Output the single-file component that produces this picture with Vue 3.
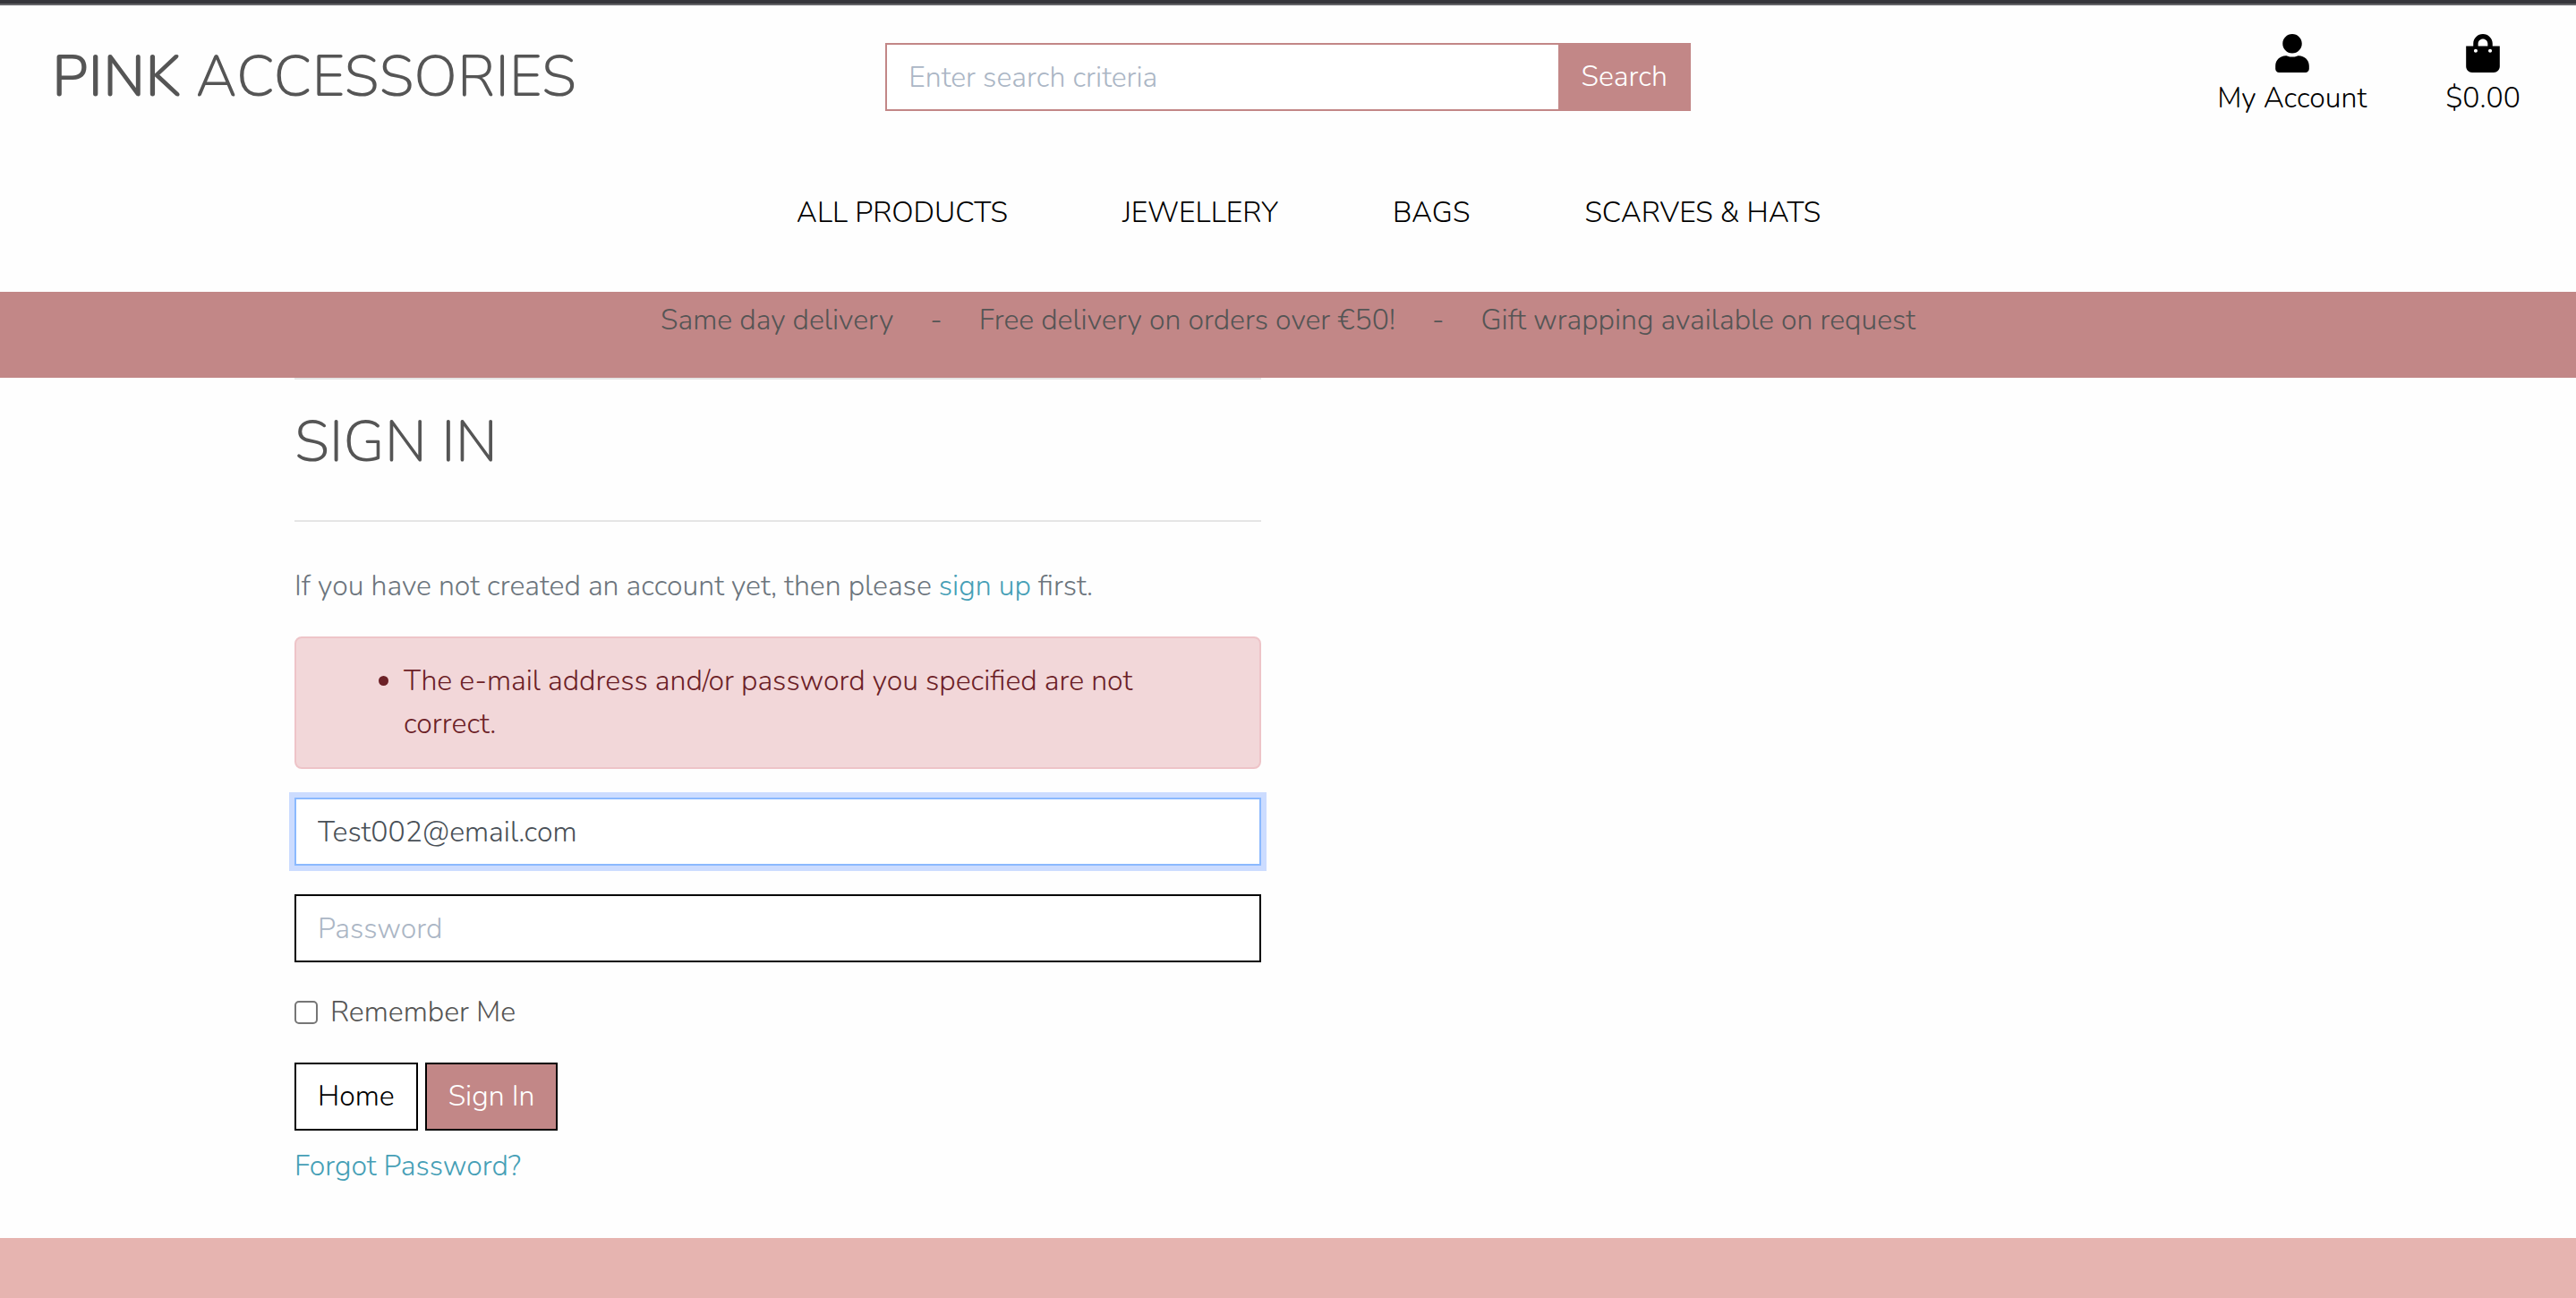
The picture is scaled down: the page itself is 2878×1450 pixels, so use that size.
<script setup>
import { ref } from 'vue'

const categories = ['ALL PRODUCTS', 'JEWELLERY', 'BAGS', 'SCARVES & HATS']
const query = ref('')
const email = ref('Test002@email.com')
const password = ref('')
const remember = ref(false)
</script>

<template>
  <div class="page">
    <header>
      <div class="masthead">
        <a class="logo" href="#"><strong>PINK</strong> ACCESSORIES</a>
        <form class="search" role="search" @submit.prevent>
          <input v-model="query" type="text" placeholder="Enter search criteria" aria-label="Search criteria">
          <button type="submit">Search</button>
        </form>
        <div class="shortcuts">
          <a href="#">
            <svg viewBox="0 0 448 512" aria-hidden="true"><path d="M224 256c70.7 0 128-57.3 128-128S294.7 0 224 0 96 57.3 96 128s57.3 128 128 128zm85 32c-24 0-36 16-85 16s-60-16-85-16C60 288 0 348 0 422v42c0 26.5 21.5 48 48 48h352c26.5 0 48-21.5 48-48v-42c0-74-60-134-139-134z" /></svg>
            <span>My Account</span>
          </a>
          <a href="#">
            <svg viewBox="0 0 448 512" aria-hidden="true"><path d="M352 160v-32C352 57.42 294.579 0 224 0 153.42 0 96 57.42 96 128v32H0v272c0 44.183 35.817 80 80 80h288c44.183 0 80-35.817 80-80V160h-96zm-192-32c0-35.29 28.71-64 64-64s64 28.71 64 64v32H160v-32zm160 120c-13.255 0-24-10.745-24-24s10.745-24 24-24 24 10.745 24 24-10.745 24-24 24zm-192 0c-13.255 0-24-10.745-24-24s10.745-24 24-24 24 10.745 24 24-10.745 24-24 24z" /></svg>
            <span>$0.00</span>
          </a>
        </div>
      </div>
      <nav>
        <a v-for="name in categories" :key="name" href="#">{{ name }}</a>
      </nav>
    </header>

    <div class="banner">
      <span>Same day delivery</span>
      <span>-</span>
      <span>Free delivery on orders over €50!</span>
      <span>-</span>
      <span>Gift wrapping available on request</span>
    </div>

    <main>
      <div class="column">
        <hr>
        <h1>SIGN IN</h1>
        <hr>
        <p class="intro">If you have not created an account yet, then please <a href="#">sign up</a> first.</p>
        <form @submit.prevent>
          <div class="alert" role="alert">
            <ul>
              <li>The e-mail address and/or password you specified are not correct.</li>
            </ul>
          </div>
          <input v-model="email" class="field active" type="email" aria-label="E-mail">
          <input v-model="password" class="field" type="password" placeholder="Password" aria-label="Password">
          <label class="remember"><input v-model="remember" type="checkbox">Remember Me</label>
          <div class="actions">
            <a class="button" href="#">Home</a>
            <button class="button primary" type="submit">Sign In</button>
          </div>
          <a class="forgot" href="#">Forgot Password?</a>
        </form>
      </div>
    </main>

    <footer></footer>
  </div>
</template>

<style>
body {
  margin: 0;
  background: #fefefe;
}
</style>

<style scoped>
* {
  box-sizing: border-box;
}

.page {
  display: flex;
  flex-direction: column;
  min-height: 100vh;
  border-top: 4px solid #36363b;
  color: #555;
  font: 300 32px/48px "Nunito", "Open Sans", sans-serif;
}

input,
button {
  font: inherit;
}

a {
  color: #459fb6;
  text-decoration: none;
}

header {
  border-top: 2px solid #646468;
}

.masthead {
  display: grid;
  grid-template-columns: repeat(3, 1fr);
  align-items: start;
  padding-top: 32px;
}

.logo {
  padding: 10px 0 0 58px;
  color: #555;
  font-size: 64px;
  line-height: 77px;
  white-space: nowrap;
}

.logo strong {
  font-weight: 400;
}

.search {
  display: flex;
  margin: 10px 30px 0;
}

.search input {
  flex: 1;
  min-width: 0;
  height: 76px;
  padding: 0 24px;
  border: 2px solid #c28787;
  border-right: 0;
  border-radius: 0;
  background: #fff;
  color: #495057;
  outline: 0;
}

::placeholder {
  color: #abb6c5;
  opacity: 1;
}

.search button {
  width: 148px;
  height: 76px;
  padding: 0;
  border: 0;
  background: #c28787;
  color: #fff;
}

.shortcuts {
  display: flex;
  justify-content: flex-end;
  gap: 88px;
  padding-right: 62px;
}

.shortcuts a {
  display: flex;
  flex-direction: column;
  align-items: center;
  gap: 5px;
  color: #000;
}

.shortcuts svg {
  width: 38px;
  height: 43px;
}

nav {
  display: flex;
  justify-content: center;
  gap: 128px;
  padding: 80px 0 64px 46px;
}

nav a {
  color: #000;
}

.banner {
  display: flex;
  justify-content: center;
  gap: 41px;
  padding: 8px 0 40px;
  background: #c28787;
}

main {
  width: 100%;
  max-width: 2280px;
  margin: 0 auto;
  padding: 0 30px;
}

.column {
  width: calc(50% - 30px);
}

hr {
  height: 2px;
  margin: 0;
  border: 0;
  background: #e5e5e5;
}

h1 {
  margin: 32px 0 48px;
  font-size: 64px;
  font-weight: 300;
  line-height: 77px;
}

.intro {
  margin: 48px 0 32px;
  color: #6c757d;
}

.alert {
  margin-bottom: 32px;
  padding: 24px 40px;
  border: 2px solid #eec4c8;
  border-radius: 8px;
  background: #f2d7d9;
  color: #6c2127;
}

.alert ul {
  margin: 0;
  padding-left: 80px;
}

.field {
  display: block;
  width: 100%;
  height: 76px;
  margin-bottom: 32px;
  padding: 0 24px;
  border: 2px solid #000;
  border-radius: 0;
  background: #fff;
  color: #495057;
  outline: 0;
}

.field.active {
  border-color: #8bb9fe;
  box-shadow: 0 0 0 6px #ccdcff;
}

.remember {
  display: flex;
  align-items: center;
  gap: 14px;
}

.remember input {
  width: 26px;
  height: 26px;
  margin: 0;
  border: 2px solid #767676;
  border-radius: 5px;
  background: #fff;
  appearance: none;
}

.remember input:checked {
  background: #c28787;
}

.actions {
  display: flex;
  gap: 8px;
  margin: 32px 0 16px;
}

.button {
  height: 76px;
  padding: 12px 24px;
  border: 2px solid #000;
  background: #fff;
  color: #000;
}

.button.primary {
  background: #c28787;
  color: #fff;
}

.forgot {
  display: table;
}

footer {
  flex: 1;
  min-height: 64px;
  margin-top: 56px;
  background: #e6b4b0;
}
</style>
